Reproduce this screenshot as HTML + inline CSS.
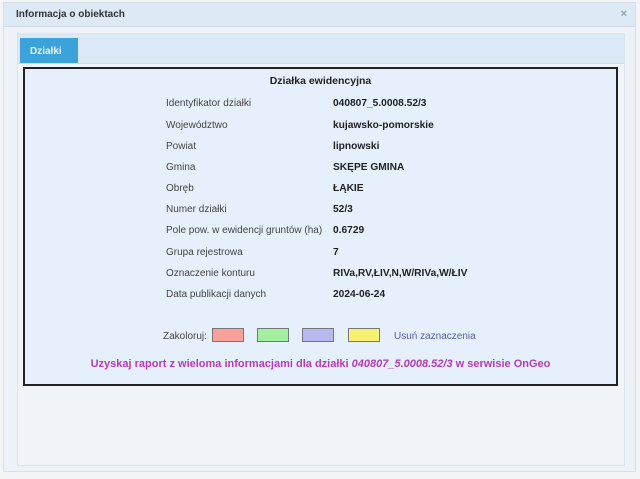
<!DOCTYPE html>
<html><head><meta charset="utf-8"><style>
*{margin:0;padding:0;box-sizing:border-box}
body{width:640px;height:479px;overflow:hidden;background:#f3f4f5;font-family:"Liberation Sans","Noto Sans CJK JP",sans-serif;font-size:10px;color:#333;position:relative}
.win{position:absolute;left:3px;top:2px;width:633px;height:470px;background:#eef2f6;border:1px solid #d6dee6}
.title{position:absolute;left:0;top:0;width:631px;height:24px;background:#dde9f5;border-bottom:1px solid #cfdbe7}
.title span{position:absolute;left:12px;top:6px;font-weight:bold;font-size:10px;color:#333}
.x{position:absolute;right:8px;top:5px;font-size:11px;color:#8aa0b5;font-weight:bold}
.panel{position:absolute;left:13px;top:30px;width:608px;height:433px;background:#f0f4f8;border:1px solid #dbe4ec}
.tabbar{position:absolute;left:0;top:0;width:606px;height:30px;background:#dbe8f6;border-bottom:1px solid #cfdce9}
.tab{position:absolute;left:2px;top:4px;width:58px;height:25px;background:#3aa3dc;color:#eaf5ff;font-weight:bold;font-size:10px;padding:8px 0 0 10px}
.box{position:absolute;left:23px;top:67px;width:595px;height:319px;background:#e5f0fc;border:2px solid #222}
.t{position:absolute;white-space:nowrap}
.l{left:141px;color:#444}
.v{left:308px;font-weight:bold;color:#222;font-size:10.2px}
.sw{position:absolute;top:259px;width:32px;height:14px;border:1px solid #777}
</style></head><body>
<div class="win">
<div class="title"><span>Informacja o obiektach</span><div class="x">×</div></div>
<div class="panel"><div class="tabbar"><div class="tab">Działki</div></div></div>
</div>
<div class="box">
<div class="t" style="left:0;width:591px;text-align:center;top:6px;font-weight:bold;color:#222;font-size:10.5px">Działka ewidencyjna</div>
<div class="t l" style="top:29px">Identyfikator działki</div><div class="t v" style="top:29px">040807_5.0008.52/3</div>
<div class="t l" style="top:51px">Województwo</div><div class="t v" style="top:51px">kujawsko-pomorskie</div>
<div class="t l" style="top:72px">Powiat</div><div class="t v" style="top:72px">lipnowski</div>
<div class="t l" style="top:93px">Gmina</div><div class="t v" style="top:93px">SKĘPE GMINA</div>
<div class="t l" style="top:114px">Obręb</div><div class="t v" style="top:114px">ŁĄKIE</div>
<div class="t l" style="top:135px">Numer działki</div><div class="t v" style="top:135px">52/3</div>
<div class="t l" style="top:156px">Pole pow. w ewidencji gruntów (ha)</div><div class="t v" style="top:156px">0.6729</div>
<div class="t l" style="top:178px">Grupa rejestrowa</div><div class="t v" style="top:178px">7</div>
<div class="t l" style="top:199px">Oznaczenie konturu</div><div class="t v" style="top:199px">RIVa,RV,ŁIV,N,W/RIVa,W/ŁIV</div>
<div class="t l" style="top:220px">Data publikacji danych</div><div class="t v" style="top:220px">2024-06-24</div>
<div class="t" style="left:138px;top:262px;color:#444">Zakoloruj:</div>
<div class="sw" style="left:187px;background:#f8a09a"></div>
<div class="sw" style="left:232px;background:#a0f0a0"></div>
<div class="sw" style="left:277px;background:#b8b8f0"></div>
<div class="sw" style="left:323px;background:#f8f070"></div>
<div class="t" style="left:369px;top:262px;color:#5560a8">Usuń zaznaczenia</div>
<div class="t" style="left:0;width:591px;text-align:center;top:289px;font-weight:bold;color:#b83ab8;font-size:11px">Uzyskaj raport z wieloma informacjami dla działki <i>040807_5.0008.52/3</i> w serwisie OnGeo</div>
</div>
</body></html>
